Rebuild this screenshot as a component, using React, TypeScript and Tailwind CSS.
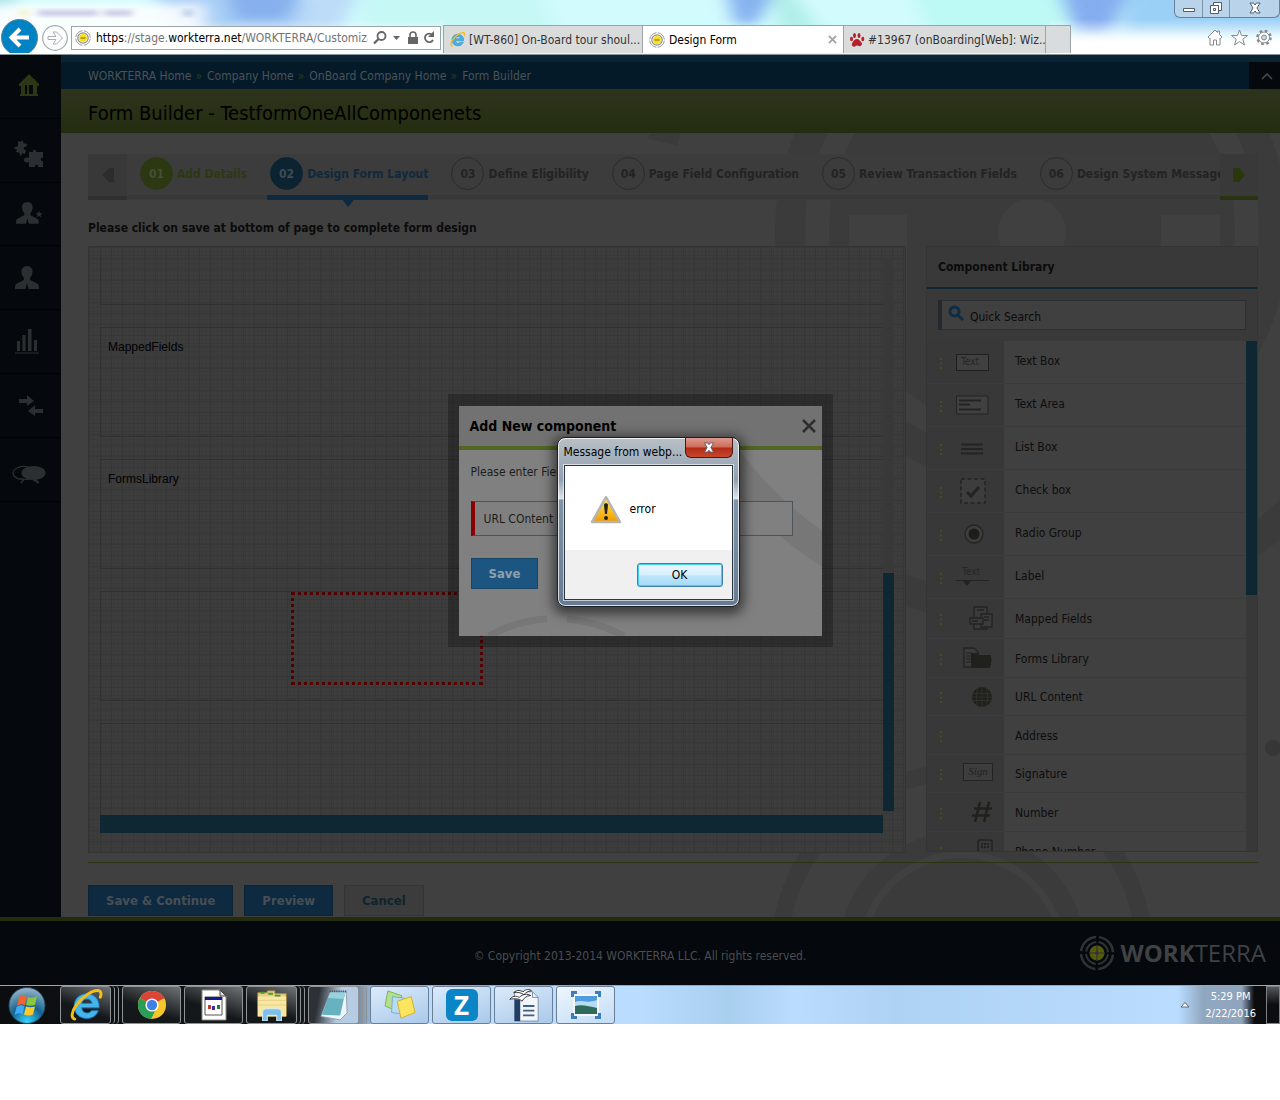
import type { ReactNode } from "react";

interface Step {
  no: string;
  label: string;
  state: "done" | "active" | "todo";
}

interface LibraryItem {
  label: string;
  height: string;
  icon: ReactNode;
}

const crumbs = ["WORKTERRA Home", "Company Home", "OnBoard Company Home", "Form Builder"];

const steps: Step[] = [
  { no: "01", label: "Add Details", state: "done" },
  { no: "02", label: "Design Form Layout", state: "active" },
  { no: "03", label: "Define Eligibility", state: "todo" },
  { no: "04", label: "Page Field Configuration", state: "todo" },
  { no: "05", label: "Review Transaction Fields", state: "todo" },
  { no: "06", label: "Design System Messages", state: "todo" },
];

const stepText = { done: "text-[#2c3812]", active: "text-[#10293c]", todo: "text-[#232323]" };
const stepCircle = {
  done: "border-[#2c3812] bg-[#2c3812] text-[#474d35]",
  active: "border-[#0c2432] bg-[#0c2432] text-[#3f4b52]",
  todo: "border-[#2b2b2b] text-[#232323]",
};

/* ---------- icons ---------- */

function TargetIcon({ className, ring = "#8f8f8f", core = "#f2dc1c" }: { className: string; ring?: string; core?: string }) {
  return (
    <svg viewBox="0 0 36 36" className={className} fill="none" aria-hidden="true">
      <circle cx="18" cy="18" r="16" stroke={ring} strokeWidth="2.5" strokeDasharray="22 3.13" strokeDashoffset="-1.6" />
      <circle cx="18" cy="18" r="11" stroke={ring} strokeWidth="2" strokeDasharray="15 2.28" strokeDashoffset="-1.2" />
      <circle cx="18" cy="18" r="7.5" fill={core} />
      <path d="M18 10v16M10 18h16" stroke={ring} strokeWidth="1.2" />
      <circle cx="18" cy="18" r="1.8" fill={ring} />
    </svg>
  );
}

function SiteIcon({ className }: { className: string }) {
  return (
    <svg viewBox="0 0 16 16" className={className} fill="none" aria-hidden="true">
      <circle cx="8" cy="8" r="7.300" fill="#fff" stroke="#9a9a9a" strokeDasharray="10 1.470" strokeDashoffset="-.7" />
      <circle cx="8" cy="8" r="5.200" stroke="#8b8b8b" strokeWidth="1.200" />
      <circle cx="8" cy="8" r="4" fill="#f6e11a" />
      <path d="M5.500 8h5" stroke="#a08c2a" strokeWidth="1.500" />
    </svg>
  );
}

function IeIcon({ className }: { className: string }) {
  return (
    <svg viewBox="0 0 32 32" className={className} fill="none" aria-hidden="true">
      <path
        d="M27.5 18.5H12.2c.2 2.8 2 4.6 4.6 4.6 1.8 0 3.1-.7 4-2.1h6.2c-1.6 4.3-5.4 7-10.3 7C10.300 28 5.500 23.500 5.500 17S10.300 6 16.700 6c6.600 0 11 4.800 11 11.200 0 .5 0 .9-.2 1.300zM12.300 14.500h9c-.4-2.400-2.100-3.800-4.500-3.800s-4.100 1.400-4.500 3.800z"
        fill="#45b3ec"
        stroke="#1b77b8"
        strokeWidth=".8"
      />
      <path d="M6 28.500c-3.600-1-2.800-6.500 1.200-12.200C12.600 8.500 22.500 2 27.500 3.300c2 .6 2.300 2.900 1.200 5.800" stroke="#f5bd1a" strokeWidth="2.600" strokeLinecap="round" />
    </svg>
  );
}

function PersonPath() {
  return <path d="M13 0c4 0 6 3 5.500 6.500-.3 2.500-1.500 4.500-2.500 5.500l.2 2L24 18c1 1 1 3 1 5H14.500L13 17l-1.500 6H1c0-2 0-4 1-5l7.800-4 .2-2C9 11 7.800 9 7.500 6.500 7 3 9 0 13 0z" />;
}

const navItems: { label: string; height: string; icon: ReactNode }[] = [
  {
    label: "Home",
    height: "h-16",
    icon: (
      <svg viewBox="0 0 24 24" className="mr-1 mb-1 h-6 w-6 fill-[#2d3714]" aria-hidden="true">
        <path d="M12 1l5 5h1v1l4 4v2h-2v8h1v2H3v-2h1v-8H2v-2zM8 12v9h2v-9zm4 0v9h4v-9z" fillRule="evenodd" />
      </svg>
    ),
  },
  {
    label: "Modules",
    height: "h-16",
    icon: (
      <svg viewBox="0 0 30 28" className="mt-1.5 mr-1 h-7 w-[30px] fill-[#2c2f32]" aria-hidden="true">
        <path d="M4 1l3 1c1-3 3-1 2 1l4 1-1 3c-3-1-3 3 0 3l-1 4-3-1c0 4-3 3-2 0l-4-1 1-3c-3 1-4-2-1-2l2-1zM15 12h4c-1-3 4-3 3 0h7v6c-3-1-3 4 0 3v6h-5c1-3-4-3-3 0h-6v-5c-3 1-5 0-5-2s2-3 5-2z" />
      </svg>
    ),
  },
  {
    label: "Administrators",
    height: "h-[63px]",
    icon: (
      <svg viewBox="0 0 28 24" className="mr-1 h-6 w-7 fill-[#2c2f32]" aria-hidden="true">
        <g transform="scale(.95)"><PersonPath /></g>
        <path d="M24 8l1.200 2.800 3 .2-2.300 2 .8 3-2.700-1.700-2.600 1.700.8-3-2.200-2 3-.2z" stroke="#05080c" strokeWidth=".6" />
      </svg>
    ),
  },
  {
    label: "Employees",
    height: "h-16",
    icon: (
      <svg viewBox="0 0 26 24" className="mr-2 h-6 w-[26px] fill-[#2c2f32]" aria-hidden="true">
        <PersonPath />
      </svg>
    ),
  },
  {
    label: "Reports",
    height: "h-16",
    icon: (
      <svg viewBox="0 0 24 25" className="mr-2 h-[25px] w-6 fill-[#2c2f32]" aria-hidden="true">
        <path d="M2 12h3v10H2zM7.500 6h3v16h-3zM13 0h3.500v22H13zM19 11h3v11h-3zM0 23.500h24v1H0z" />
      </svg>
    ),
  },
  {
    label: "Transfers",
    height: "h-16",
    icon: (
      <svg viewBox="0 0 26 22" className="h-[22px] w-[26px] fill-[#2c2f32]" aria-hidden="true">
        <path d="M1 4h8V0l7 6-7 5V8H1zM25 14h-8v-4l-7 6 7 5v-3h8z" />
      </svg>
    ),
  },
  {
    label: "Messages",
    height: "h-16",
    icon: (
      <svg viewBox="0 0 34 20" className="mt-2.5 mr-1 h-5 w-[34px]" fill="none" aria-hidden="true">
        <path d="M16 2C8 0 1 4 1 8c0 3 3 5 6 6h4c3 1 6 0 8 0" stroke="#2c2f32" strokeWidth="1.300" />
        <path d="M12 14l-3 4M23 14l4 4-7-4z" stroke="#2c2f32" strokeWidth="1.500" />
        <ellipse cx="21.500" cy="8" rx="12" ry="7" fill="#2c2f32" />
      </svg>
    ),
  },
];

const stroke = "#232323";

const libraryItems: LibraryItem[] = [
  {
    label: "Text Box",
    height: "h-[43px]",
    icon: (
      <span className="mr-[15px] flex h-[17px] w-[33px] items-center border border-[#1f1f1f] bg-[#404040] pl-1 text-[10px] leading-none text-[#262626]">Text</span>
    ),
  },
  {
    label: "Text Area",
    height: "h-[43px]",
    icon: (
      <svg viewBox="0 0 33 20" className="mr-[15px] h-5 w-[33px]" fill="none" stroke={stroke} aria-hidden="true">
        <path d="M.5 1h31.500v18H.5z" fill="#404040" />
        <path d="M3 5.500h22M3 9.500h11M3 14.500h22" strokeWidth="2" />
      </svg>
    ),
  },
  {
    label: "List Box",
    height: "h-[43px]",
    icon: (
      <svg viewBox="0 0 24 12" className="mt-0.5 mr-5 h-3 w-6" stroke={stroke} aria-hidden="true">
        <path d="M1 1.500h22M1 6h22M1 10.500h22" strokeWidth="2" />
      </svg>
    ),
  },
  {
    label: "Check box",
    height: "h-[43px]",
    icon: (
      <svg viewBox="0 0 26 26" className="mr-[18px] h-[26px] w-[26px]" fill="none" stroke={stroke} aria-hidden="true">
        <path d="M1 1h24v24H1z" strokeDasharray="4 2.500" strokeWidth="1.500" fill="#3d3d3d" />
        <path d="M7 14l4 4 8-9" strokeWidth="3" />
      </svg>
    ),
  },
  {
    label: "Radio Group",
    height: "h-[43px]",
    icon: (
      <svg viewBox="0 0 20 20" className="mr-5 h-5 w-5" fill="none" aria-hidden="true">
        <circle cx="10" cy="10" r="9" stroke={stroke} strokeWidth="1.300" fill="#3d3d3d" />
        <circle cx="10" cy="10" r="5.500" fill="#1e1e19" />
      </svg>
    ),
  },
  {
    label: "Label",
    height: "h-[43px]",
    icon: (
      <span className="mr-[15px] flex w-[33px] flex-col pl-1.5 text-[10px] leading-none text-[#262626]">
        Text
        <svg viewBox="0 0 33 8" className="mt-0.5 -ml-1.5 h-2 w-[33px]" fill="#232323" aria-hidden="true">
          <path d="M0 1h33v1H0zM7 2h8l-4 5z" />
        </svg>
      </span>
    ),
  },
  {
    label: "Mapped Fields",
    height: "h-10",
    icon: (
      <svg viewBox="0 0 24 26" className="mr-[11px] h-[26px] w-6" fill="#3b3b3b" stroke={stroke} strokeWidth="1.300" aria-hidden="true">
        <path d="M5 1h13v22H5z" />
        <path d="M12 8h11v13H12z" />
        <path d="M1 12h13v6H1zM8 4h7M15 11h5M15 14h5M3 15h6" />
      </svg>
    ),
  },
  {
    label: "Forms Library",
    height: "h-[39px]",
    icon: (
      <svg viewBox="0 0 30 22" className="mr-[11px] h-[22px] w-[30px]" aria-hidden="true">
        <path d="M1 1h10l4 4v15H1z" fill="#3b3b3b" stroke={stroke} strokeWidth="1.300" />
        <path d="M3 6h6M3 9h6M3 12h6M3 15h6" stroke={stroke} />
        <path d="M8 6h7l1 2h12v4l1-1-2 10H9l-1-3z" fill="#20201c" />
      </svg>
    ),
  },
  {
    label: "URL Content",
    height: "h-[38px]",
    icon: (
      <svg viewBox="0 0 20 20" className="mr-3 h-5 w-5" fill="none" aria-hidden="true">
        <circle cx="10" cy="10" r="10" fill="#20201c" />
        <path d="M0 6.500h20M0 10h20M0 13.500h20M10 0v20M6 0c-2 6-2 14 0 20M14 0c2 6 2 14 0 20" stroke="#34342f" strokeWidth=".8" />
      </svg>
    ),
  },
  { label: "Address", height: "h-[39px]", icon: null },
  {
    label: "Signature",
    height: "h-[38px]",
    icon: (
      <span className="mr-[11px] mb-1 flex h-[18px] w-[30px] items-center justify-center border border-[#232323] bg-[#3d3d3d] font-['Liberation_Serif',serif] text-[11px] leading-none text-[#232323] italic">Sign</span>
    ),
  },
  {
    label: "Number",
    height: "h-[39px]",
    icon: (
      <svg viewBox="0 0 22 22" className="mr-[11px] h-[22px] w-[22px]" stroke="#20201c" strokeWidth="2.500" aria-hidden="true">
        <path d="M9 1L4 21M18 1l-5 20M3 7.500h18M1 14.500h18" />
      </svg>
    ),
  },
  {
    label: "Phone Number",
    height: "h-[39px]",
    icon: (
      <svg viewBox="0 0 16 20" className="mr-[11px] mb-1 h-5 w-4" fill="none" stroke={stroke} strokeWidth="1.500" aria-hidden="true">
        <rect x="1" y="1" width="14" height="18" rx="2" />
        <path d="M4 5h8M4 8h8" strokeDasharray="2 1" strokeWidth="2" />
      </svg>
    ),
  },
];

/* ---------- browser window ---------- */

function GlassBackdrop() {
  return (
    <svg viewBox="0 0 1280 54" preserveAspectRatio="none" className="absolute inset-0 h-full w-full" aria-hidden="true">
      <defs>
        <filter id="soft" x="-20%" y="-60%" width="140%" height="220%">
          <feGaussianBlur stdDeviation="9 5" />
        </filter>
        <filter id="text-soft">
          <feGaussianBlur stdDeviation="4 2" />
        </filter>
        <linearGradient id="fade" x1="0" x2="0" y1="0" y2="1">
          <stop offset=".35" stopColor="#fff" stopOpacity="0" />
          <stop offset=".8" stopColor="#fff" />
        </linearGradient>
      </defs>
      <rect width="1280" height="54" fill="#d2fbfd" />
      <g filter="url(#soft)">
        <path d="M-20-10h40L8 14H-20z" fill="#a5e3e6" />
        <path d="M150-10h150l20 60H190z" fill="#a9cff6" />
        <path d="M225-10h80l-20 30h-50z" fill="#86b0ee" />
        <path d="M310-10h50l-30 60h-40z" fill="#bcdcf8" />
        <path d="M360-10h180l20 50-200 10z" fill="#c6f8f6" />
        <path d="M725-10h52l-20 34h-22z" fill="#86b2f0" />
        <path d="M770-10h20l30 40h-40z" fill="#b0eee9" />
        <path d="M910-10h160l-10 45H930z" fill="#bdf9f5" />
        <path d="M1058-10h72l-20 45h-34z" fill="#84adf0" />
        <path d="M1130-10h170v45h-180z" fill="#9ad0f6" />
      </g>
      <rect x="-20" y="4" width="225" height="60" fill="#fff" opacity=".85" filter="url(#soft)" />
      <rect width="445" height="54" fill="url(#fade)" opacity=".8" />
      <rect x="1050" width="230" height="54" fill="url(#fade)" />
      <g filter="url(#text-soft)" opacity=".7">
        <path d="M38 13h60M104 13h28" stroke="#b7b2dc" strokeWidth="6" />
        <circle cx="24" cy="13" r="4" fill="#efe9a0" />
        <circle cx="188" cy="13" r="4" fill="#8fa8d8" />
      </g>
    </svg>
  );
}

function BrowserBar() {
  return (
    <header className="relative flex h-[55px] items-end border-b border-[#8a9496] bg-[#d2fbfd] pb-px text-xs">
      <GlassBackdrop />
      <div className="relative flex h-8 w-[71px] shrink-0 items-end">
        <button type="button" aria-label="Back" className="h-[34px] w-10 overflow-hidden pl-px">
          <svg viewBox="0 0 38 34" className="h-[34px] w-[38px]" fill="none" aria-hidden="true">
            <circle cx="18.500" cy="18.500" r="18" fill="#0083c4" stroke="#5d7f90" />
            <path d="M28 18.500H11M19 10l-8.500 8.500L19 27" stroke="#fff" strokeWidth="4" />
          </svg>
        </button>
        <button type="button" aria-label="Forward" className="mb-0.5 ml-0.5">
          <svg viewBox="0 0 26 26" className="h-[26px] w-[26px]" fill="none" stroke="#a5aeb0" aria-hidden="true">
            <circle cx="13" cy="13" r="12.300" fill="#fff" fillOpacity=".6" strokeWidth="1.200" />
            <path d="M6 11.500h8L11 7h3.500l6 6-6 6H11l3-4.500H6z" fill="#fff" />
          </svg>
        </button>
      </div>
      <div className="relative mb-[3px] flex h-6 w-[370px] shrink-0 items-center border border-[#9ba4a6] bg-white">
        <SiteIcon className="ml-[3px] h-4 w-4" />
        <div className="ml-[5px] flex w-[272px] overflow-hidden whitespace-nowrap text-[#737373]">
          <span className="text-black">https</span>://stage.<span className="text-black">workterra.net</span>/WORKTERRA/Customiza
        </div>
        <svg viewBox="0 0 66 16" className="ml-[5px] h-4 w-[66px] shrink-0" fill="none" stroke="#666" aria-hidden="true">
          <circle cx="8.500" cy="6" r="4" strokeWidth="1.800" />
          <path d="M5.500 9L1 13.500" strokeWidth="2.300" />
          <path d="M20 6h7l-3.500 4z" fill="#666" stroke="none" />
          <path d="M35 7h10v7H35z" fill="#666" stroke="none" />
          <path d="M37 8V5c0-4 6-4 6 0v3" strokeWidth="1.600" />
          <path d="M59.500 5A4.300 4.300 0 1 0 60 10" strokeWidth="1.800" />
          <path d="M61 1v6h-6z" fill="#666" stroke="none" />
        </svg>
      </div>
      <nav className="relative flex h-7 min-w-0 flex-1 pl-0.5" aria-label="Browser tabs">
        <button type="button" className="flex w-[200px] items-center gap-[3px] border border-b-0 border-[#9ba4a6] bg-[#dadcdc] pl-[5px] whitespace-nowrap text-[#333]">
          <IeIcon className="h-[17px] w-[17px] shrink-0" />
          [WT-860] On-Board tour shoul...
        </button>
        <button type="button" className="flex w-[200px] items-center gap-1 border-t border-[#9ba4a6] bg-white pl-[6px] text-black">
          <SiteIcon className="h-4 w-4" />
          Design Form
          <svg viewBox="0 0 10 10" className="mr-1.5 ml-auto h-[9px] w-[9px]" stroke="#a3a3a3" strokeWidth="2" aria-hidden="true">
            <path d="M1 1l8 8M9 1L1 9" />
          </svg>
        </button>
        <button type="button" className="flex w-[203px] items-center gap-[3px] border border-b-0 border-[#9ba4a6] bg-[#dadcdc] pl-[5px] whitespace-nowrap text-[#333]">
          <svg viewBox="0 0 16 16" className="h-4 w-4 shrink-0" fill="#b5202a" aria-hidden="true">
            <path d="M8 7c2 0 3 2 4.500 3.500S12 15 10 14s-3-.5-4 .5-4-.5-3-3S6 7 8 7z" />
            <ellipse cx="2.500" cy="7" rx="1.500" ry="2.200" />
            <ellipse cx="5.500" cy="3.500" rx="1.500" ry="2.500" />
            <ellipse cx="10" cy="3.500" rx="1.500" ry="2.500" />
            <ellipse cx="13.800" cy="7" rx="1.500" ry="2.200" />
          </svg>
          #13967 (onBoarding[Web]: Wiz...
        </button>
        <button type="button" aria-label="New tab" className="w-[25px] border-t border-r border-[#9ba4a6] bg-[#d8dcdc]" />
        <div className="mt-1 ml-auto flex items-start pr-[7px]">
          <svg viewBox="0 0 66 17" className="h-[17px] w-[66px]" fill="#fff" stroke="#84898c" aria-hidden="true">
            <path d="M8 1L1 8l1.500 1.500.500-.5v7h3.500v-5h3v5H13V9l.500.500L15 8l-2.500-2.500V2h-2v1.500z" />
            <path d="M32.500 1l2 5.500h6l-4.700 3.700 1.700 5.800-5-3.400-5 3.400 1.700-5.800L24.500 6.500h6z" />
            <circle cx="57" cy="8.500" r="6.500" strokeWidth="2.600" strokeDasharray="2.600 2.500" />
            <circle cx="57" cy="8.500" r="5.500" />
            <circle cx="57" cy="8.500" r="2.500" fill="#c5d6e6" />
          </svg>
        </div>
      </nav>
      <div className="absolute top-0 right-0 flex h-[18px] w-[106px] overflow-hidden rounded-b-md border border-t-0 border-[#68809a] bg-[#b9d3ea]">
        <button type="button" aria-label="Minimize" className="flex w-7 items-start justify-center border-r border-[#7d93ac]">
          <svg viewBox="0 0 12 10" className="mt-[3px] h-2.5 w-3" aria-hidden="true">
            <path d="M.5 5.500h11v3H.5z" fill="#fff" stroke="#525d6d" />
          </svg>
        </button>
        <button type="button" aria-label="Restore" className="flex w-[27px] items-start justify-center border-r border-[#7d93ac]">
          <svg viewBox="0 0 12 12" className="mt-0.5 h-3 w-3" fill="#fff" stroke="#525d6d" fillRule="evenodd" aria-hidden="true">
            <path d="M3.500.5h8v8h-8z" />
            <path d="M.5 3.500h8v8h-8zM3.500 6.500h2v2h-2z" />
          </svg>
        </button>
        <button type="button" aria-label="Close" className="flex flex-1 items-start justify-center">
          <svg viewBox="0 0 12 12" className="mt-0.5 h-3 w-3" aria-hidden="true">
            <path d="M1 1h3.500L6 3l1.500-2H11L8 6l3 5H7.500L6 9l-1.500 2H1l3-5z" fill="#fff" stroke="#525d6d" />
          </svg>
        </button>
      </div>
    </header>
  );
}

/* ---------- page ---------- */

function Watermark() {
  return (
    <svg viewBox="61 133 1219 784" preserveAspectRatio="xMaxYMin slice" className="absolute inset-0 h-full w-full" fill="none" stroke="#3b3b3b" aria-hidden="true">
      <circle cx="1032" cy="232" r="380" strokeWidth="30" strokeDasharray="1050 144" strokeDashoffset="-90" />
      <circle cx="1032" cy="232" r="242" strokeWidth="30" />
      <circle cx="1032" cy="232" r="203" fill="#3b3b3b" stroke="none" />
      <path d="M849 215h58v100h-58zM1161 215h59v100h-59z" fill="#404040" stroke="none" />
      <circle cx="1032" cy="232" r="34" fill="#404040" stroke="none" />
      <circle cx="962" cy="955" r="183" strokeWidth="17" />
      <circle cx="962" cy="955" r="114" strokeWidth="20" />
      <circle cx="962" cy="955" r="97" fill="#3b3b3b" stroke="none" />
      <circle cx="1273" cy="748" r="8" fill="#363636" stroke="none" />
    </svg>
  );
}

function StepBar() {
  return (
    <div className="flex h-[46px] bg-[#3c3c3c] text-xs font-bold">
      <button type="button" aria-label="Previous" className="flex w-[39px] shrink-0 items-center justify-center border-b-4 border-[#303030] bg-[#383838]">
        <svg viewBox="0 0 12 14" className="h-3.5 w-3" fill="#2c2c2c" aria-hidden="true">
          <path d="M12 0v14H7L0 7l7-7z" />
        </svg>
      </button>
      <ol className="mb-px flex min-w-0 flex-1 gap-5 overflow-x-clip border-b-4 border-[#383838] pl-2.5 whitespace-nowrap">
        {steps.map(step => (
          <li key={step.no} className="relative shrink-0">
            <a
              href={`#step-${step.no}`}
              aria-current={step.state === "active" ? "step" : undefined}
              className={`-mb-1 flex h-[45px] items-center gap-1 pl-[3px] pb-1.5 ${stepText[step.state]}`}
            >
              <span className={`flex size-[33px] items-center justify-center rounded-full border ${stepCircle[step.state]}`}>{step.no}</span>
              {step.label}
            </a>
            {step.state === "active" && (
              <svg viewBox="0 0 160 12" preserveAspectRatio="none" className="absolute top-[41px] left-0 h-3 w-full" fill="#0e2a40" aria-hidden="true">
                <path d="M0 0h160v5H0zM75 5h11l-5.500 7z" />
              </svg>
            )}
          </li>
        ))}
      </ol>
      <button type="button" aria-label="Next" className="flex w-[38px] shrink-0 items-center justify-center border-b-4 border-[#28330f] bg-[#393939]">
        <svg viewBox="0 0 12 14" className="h-3.5 w-3" fill="#28370c" aria-hidden="true">
          <path d="M0 0v14h6l6-7-6-7z" />
        </svg>
      </button>
    </div>
  );
}

function DropBox({ label, children }: { label?: string; children?: ReactNode }) {
  return (
    <div className="h-[110px] shrink-0 border border-r-0 border-[#313131]">
      {label && <p className="px-[7px] pt-[11px] font-['Liberation_Sans',Arial,sans-serif] text-xs leading-4 text-black">{label}</p>}
      {children}
    </div>
  );
}

function Canvas() {
  return (
    <section
      aria-label="Form canvas"
      className="min-w-0 flex-1 border border-[#343434] bg-[#3d3d3d] bg-[linear-gradient(#373737_1px,transparent_1px),linear-gradient(90deg,#373737_1px,transparent_1px),linear-gradient(#3a3a3a_1px,transparent_1px),linear-gradient(90deg,#3a3a3a_1px,transparent_1px)] bg-[size:11px_11px,11px_11px,4px_4px,4px_4px] pt-2.5 pr-[11px] pb-[19px] pl-[11px]"
    >
      <div className="flex h-[558px]">
        <div className="flex min-w-0 flex-1 flex-col gap-[22px] overflow-hidden">
          <div className="h-12 shrink-0 border border-t-0 border-r-0 border-[#313131]" />
          <DropBox label="MappedFields" />
          <DropBox label="FormsLibrary" />
          <DropBox>
            <div className="ml-[190px] h-[93px] w-48 border-3 border-dotted border-[#530000]" />
          </DropBox>
          <DropBox />
        </div>
        <div className="flex w-[11px] flex-col justify-end bg-[#393939] pb-1">
          <div className="h-[238px] bg-[#0f2733]" />
        </div>
      </div>
      <div className="mr-[11px] h-[18px] bg-[#0f2733]" />
    </section>
  );
}

function ComponentLibrary() {
  return (
    <aside className="flex h-[606px] w-[332px] shrink-0 flex-col overflow-hidden border border-[#343434] bg-[#393939]">
      <h2 className="flex h-[42px] shrink-0 items-center border-b-2 border-[#0f2733] px-[11px] pb-px text-xs font-bold text-[#0b0b0b]">Component Library</h2>
      <div className="mx-[11px] mt-[11px] mb-[11px] flex h-[30px] shrink-0 items-center border border-l-4 border-[#2c2f31] border-l-[#23292e] bg-[#404040]">
        <svg viewBox="0 0 16 16" className="mb-1 ml-1.5 h-4 w-4" fill="none" stroke="#102c44" strokeWidth="3" aria-hidden="true">
          <circle cx="6.500" cy="6.500" r="4.500" />
          <path d="M10 10l5 5" />
        </svg>
        <input aria-label="Quick Search" defaultValue="Quick Search" className="mt-[3px] ml-1.5 min-w-0 flex-1 bg-transparent text-xs text-[#0a0a0a] outline-none" />
      </div>
      <div className="flex min-h-0 flex-1">
        <ul className="min-w-0 flex-1 overflow-hidden">
          {libraryItems.map((item, index) => (
            <li key={item.label} className={`flex ${item.height}`}>
              <div className="flex w-[77px] shrink-0 items-center justify-between border-b border-[#3d3d3d] bg-[#383838] pl-[13px]">
                <svg viewBox="0 0 2 11" className="mt-0.5 h-[11px] w-0.5" fill="#444d1c" aria-hidden="true">
                  <path d="M0 0h2v2H0zM0 4.500h2v2H0zM0 9h2v2H0z" />
                </svg>
                {item.icon}
              </div>
              <div className={`flex flex-1 items-center border-b border-[#3a3a3a] bg-[#404040] pl-[11px] text-xs text-[#0d0d0d] ${index < 6 ? "pb-[3px]" : "pt-px"}`}>{item.label}</div>
            </li>
          ))}
        </ul>
        <div className="w-[11px] bg-[#383838]">
          <div className="h-[254px] bg-[#0f2733]" />
        </div>
      </div>
    </aside>
  );
}

function AlertDialog() {
  return (
    <div
      role="alertdialog"
      aria-labelledby="alert-title"
      className="absolute top-[31px] left-[98px] flex h-[170px] w-[183px] flex-col rounded-lg border border-[#1a1f26] bg-[linear-gradient(#b9c0c6_0%,#8fa0b0_25%,#dfe6ea_36%,#8295a8_37%,#667b92_100%)] px-1.5 pb-1.5 text-xs shadow-[0_3px_12px_4px_rgba(0,0,0,0.55),inset_0_0_0_1px_rgba(255,255,255,0.75)]"
    >
      <div className="flex h-[27px] shrink-0 justify-between">
        <h2 id="alert-title" className="relative pt-1.5 whitespace-nowrap text-black">Message from webp...</h2>
        <button type="button" aria-label="Close" className="flex h-5 w-12 shrink-0 items-center justify-center rounded-b-md border border-t-0 border-[#4a1512] bg-[linear-gradient(#dc9a8e,#cf6b58_48%,#b02a14_52%,#c8492f)]">
          <svg viewBox="0 0 12 12" className="h-[11px] w-3" aria-hidden="true">
            <path d="M1 1h3.500L6 3l1.500-2H11L8 6l3 5H7.500L6 9l-1.500 2H1l3-5z" fill="#fff" stroke="#525d6d" />
          </svg>
        </button>
      </div>
      <div className="flex min-h-0 flex-1 flex-col border border-[#2c3640] bg-white outline outline-white/60">
        <div className="flex flex-1 items-center gap-2 pb-0.5 pl-[25px] text-black">
          <svg viewBox="0 0 32 29" className="mt-1 h-[29px] w-8 shrink-0" aria-hidden="true">
            <defs>
              <linearGradient id="warn" x1="0" x2="0" y1="0" y2="1">
                <stop offset="0" stopColor="#fff04a" />
                <stop offset="1" stopColor="#f49b00" />
              </linearGradient>
            </defs>
            <path d="M16 2L2 27h28z" fill="url(#warn)" stroke="#b5b5b5" strokeWidth="2.500" strokeLinejoin="round" />
            <path d="M14 10c0-2.500 4-2.500 4 0l-1 9h-2z" fill="#222" />
            <circle cx="16" cy="23" r="2" fill="#222" />
          </svg>
          <span className="pt-1">error</span>
        </div>
        <div className="flex h-[49px] items-center justify-end bg-[#f0f0f0] pr-[9px]">
          <button type="button" className="h-6 w-[86px] rounded-[3px] border border-[#3c7fb1] bg-[linear-gradient(#eaf6fd,#d9f0fc_48%,#bee6fd_52%,#a7d9f5)] text-black shadow-[inset_0_0_0_1px_#45d0f8]">OK</button>
        </div>
      </div>
    </div>
  );
}

function AddComponentDialog() {
  return (
    <div className="absolute inset-x-0 top-[339px] flex justify-center">
      <div role="dialog" aria-labelledby="dialog-title" className="relative h-[253px] w-[385px] border-[11px] border-t-12 border-black/25">
        <div className="relative flex h-full flex-col overflow-hidden bg-[#808080]">
          <svg viewBox="0 0 363 230" className="absolute inset-0 h-full w-full" fill="none" stroke="#777" aria-hidden="true">
            <circle cx="573" cy="-174" r="380" strokeWidth="30" />
            <path d="M30 230Q58 214 88 213M108 213Q140 216 165 230" strokeWidth="7" />
          </svg>
          <div className="relative flex h-11 shrink-0 items-center justify-between border-b-4 border-[#516621] bg-[#727272] pr-1.5 pl-[11px]">
            <h2 id="dialog-title" className="text-sm font-bold text-black">Add New component</h2>
            <button type="button" aria-label="Close">
              <svg viewBox="0 0 14 14" className="h-3.5 w-3.5" stroke="#2e2e2e" strokeWidth="2.500" aria-hidden="true">
                <path d="M1 1l12 12M13 1L1 13" />
              </svg>
            </button>
          </div>
          <div className="relative flex flex-col items-start pr-[29px] pl-3 text-xs text-[#1c1c1c]">
            <label htmlFor="field-name" className="mt-3.5 leading-4">Please enter Fiel</label>
            <input id="field-name" defaultValue="URL COntent" className="mt-[21px] h-[35px] w-full border border-l-4 border-[#4c555b] border-l-[#8b0000] bg-[#808080] px-[9px] outline-none" />
            <button type="button" className="mt-[22px] h-[31px] border border-[#184664] bg-[#1c5580] px-[17px] text-[13px] font-bold text-[#8fa0ad]">Save</button>
          </div>
        </div>
        <AlertDialog />
      </div>
    </div>
  );
}

function Page() {
  return (
    <div className="relative bg-[#05080c]">
      <div className="flex border-b-4 border-[#232c0d]">
        <nav className="w-[61px] shrink-0" aria-label="Main">
          {navItems.map(item => (
            <a key={item.label} href={`#${item.label.toLowerCase()}`} aria-label={item.label} className={`flex items-center justify-center border-b border-[#010203] ${item.height}`}>
              {item.icon}
            </a>
          ))}
        </nav>
        <div className="min-w-0 flex-1">
          <div className="flex h-[34px] items-end border-t-7 border-[#0a2434] bg-[#051a28] text-xs text-[#4a5358]">
            <nav className="flex h-full flex-1 items-center gap-1 pl-[27px]" aria-label="Breadcrumb">
              {crumbs.map((crumb, index) => (
                <span key={crumb} className="flex gap-[5px]">
                  {index > 0 && <span className="text-[#263c1a]">»</span>}
                  <a href="#home">{crumb}</a>
                </span>
              ))}
            </nav>
            <button type="button" aria-label="Collapse" className="flex h-full w-[31px] items-center justify-center bg-[#05080c] pl-1">
              <svg viewBox="0 0 12 8" className="h-2 w-3" fill="none" stroke="#4a4d50" strokeWidth="1.500" aria-hidden="true">
                <path d="M1 7l5-5 5 5" />
              </svg>
            </button>
          </div>
          <h1 className="flex h-11 items-center bg-linear-to-b from-[#2d341c] to-[#242d10] pt-1 pl-[27px] text-xl text-black">Form Builder - TestformOneAllComponenets</h1>
          <main className="relative bg-[#404040]">
            <Watermark />
            <div className="relative pt-[21px] pr-[22px] pb-px pl-[27px]">
              <StepBar />
              <p className="mt-5 mb-2.5 text-xs leading-4 font-bold text-[#0b0b0b]">Please click on save at bottom of page to complete form design</p>
              <div className="flex gap-5">
                <Canvas />
                <ComponentLibrary />
              </div>
              <div className="mt-[9px] flex gap-[11px] border-t border-[#28330f] pt-[22px] text-[13px] font-bold">
                <button type="button" className="h-[31px] border border-[#0c2536] bg-[#0e2a40] px-[17px] text-[#474f55]">Save &amp; Continue</button>
                <button type="button" className="h-[31px] border border-[#0c2536] bg-[#0e2a40] px-[17px] text-[#474f55]">Preview</button>
                <button type="button" className="h-[31px] border border-[#343434] bg-[#3c3c3c] px-[17px] text-[#10242e]">Cancel</button>
              </div>
            </div>
          </main>
        </div>
      </div>
      <footer className="relative flex h-16 items-center justify-center pt-1.5 text-xs text-[#4b4d50]">
        © Copyright 2013-2014 WORKTERRA LLC. All rights reserved.
        <div className="absolute top-3.5 right-3.5 flex items-center gap-1.5 font-['Open_Sans',sans-serif] text-2xl leading-9 text-[#3f4245]">
          <TargetIcon className="size-9" ring="#303336" core="#57590c" />
          <span><b>WORK</b>TERRA</span>
        </div>
      </footer>
      <AddComponentDialog />
    </div>
  );
}

/* ---------- taskbar ---------- */

const darkTask = "bg-[linear-gradient(20deg,#15181b_40%,#6f7376_100%)] border-[#8f9396]";
const lightTask = "bg-[linear-gradient(160deg,#dbeafb,#a9c9ea)] border-[#6a7f96]";

const taskIcons: { label: string; tone: string; stack: boolean; icon: ReactNode }[] = [
  { label: "Internet Explorer", tone: darkTask, stack: true, icon: <IeIcon className="size-9" /> },
  {
    label: "Chrome",
    tone: darkTask,
    stack: false,
    icon: (
      <svg viewBox="0 0 32 32" className="size-[30px]" aria-hidden="true">
        <circle cx="16" cy="16" r="15" fill="#f7c62b" />
        <path d="M16 16L3 8.500A15 15 0 0 1 29 8.500z" fill="#dc4437" />
        <path d="M16 8h13.200" stroke="#dc4437" strokeWidth="2" />
        <path d="M16 16L3 8.500A15 15 0 0 0 15 31l6-12z" fill="#2a9d57" />
        <circle cx="16" cy="16" r="7" fill="#fff" />
        <circle cx="16" cy="16" r="5.500" fill="#3f7fe8" />
      </svg>
    ),
  },
  {
    label: "Document",
    tone: darkTask,
    stack: false,
    icon: (
      <svg viewBox="0 0 26 32" className="h-8 w-[26px]" aria-hidden="true">
        <path d="M1 1h18l6 6v24H1z" fill="#fdfdfa" stroke="#888" />
        <path d="M19 1v6h6z" fill="#ddd" stroke="#444" />
        <path d="M4 8h17v18H4z" fill="#fff" stroke="#555" />
        <path d="M4 8h17v3H4z" fill="#17178c" />
        <path d="M7 16h3v4H7z" fill="#c33" />
        <path d="M11 17h3v4h-3z" fill="#33a" />
        <path d="M16 16h3v4h-3z" fill="#2a7a2a" />
      </svg>
    ),
  },
  {
    label: "Explorer",
    tone: darkTask,
    stack: true,
    icon: (
      <svg viewBox="0 0 34 34" className="size-8" aria-hidden="true">
        <path d="M2 4h10v-2h8v3h12v24H2z" fill="#ecd07a" stroke="#b59540" />
        <path d="M2 8h30v21H2z" fill="#f7e7a5" />
        <path d="M5 3h4v2H5zM13 4h5v2h-5zM20 6h6v2h-6z" fill="#3c9a48" />
        <path d="M2 12h30M2 17h30" stroke="#e6cd7c" />
        <path d="M7 34v-9c0-3 2-4 4-4h12c2 0 4 1 4 4v9h-5v-6H12v6z" fill="#7fc0e8" stroke="#d9effb" />
      </svg>
    ),
  },
  {
    label: "Notepad",
    tone: "bg-[linear-gradient(100deg,#2d3135_20%,#b5cce4_60%)] border-[#8f9396]",
    stack: true,
    icon: (
      <svg viewBox="0 0 32 36" className="h-8 w-7" aria-hidden="true">
        <path d="M12 3h18l1 24-8 8-22-4z" fill="#eef4f7" stroke="#8b9aa3" />
        <path d="M12 3h17l-6 27-21-1z" fill="#66b2c0" />
        <path d="M12 3h17l-2 8-18-1z" fill="#9ad2dc" />
        <path d="M11 2.500h19" stroke="#555" strokeWidth="2" strokeDasharray="1.500 1" />
      </svg>
    ),
  },
  {
    label: "Sticky Notes",
    tone: lightTask,
    stack: false,
    icon: (
      <svg viewBox="0 0 34 32" className="h-[30px] w-8" aria-hidden="true">
        <path d="M4 1l15 5-6 16L1 17z" fill="#b5e08a" stroke="#7fb257" />
        <path d="M9 7l14 2-2 17L8 24z" fill="#b9dcf6" stroke="#7ba8d0" />
        <path d="M14 12l15-5 4 17-15 6z" fill="#fbe55f" stroke="#cfae2b" />
      </svg>
    ),
  },
  {
    label: "Zoom",
    tone: lightTask,
    stack: false,
    icon: <span className="flex h-8 w-8 items-center justify-center rounded-md bg-[#0a86c6] font-['Open_Sans',sans-serif] text-[26px] leading-none font-bold text-white">Z</span>,
  },
  {
    label: "Writer",
    tone: lightTask,
    stack: false,
    icon: (
      <svg viewBox="0 0 32 36" className="h-[34px] w-8" aria-hidden="true">
        <path d="M6 4h19l6 6v25H6z" fill="#f2f6fa" stroke="#7b8fa5" />
        <path d="M25 4v6h6" fill="none" stroke="#7b8fa5" />
        <path d="M6 12h6v23H6z" fill="#1f3f66" />
        <path d="M15 19h12M15 24h12M15 29h12" stroke="#3d5f8a" strokeWidth="2" />
        <path d="M5 5c4-4 8-2 10-1 3-3 7-3 9-1-4 0-6 2-8 4-3-2-7-3-11-2zM1 12c4-5 8-3 10-2 4-4 9-4 12-2-5 0-7 3-9 6-3-3-8-3-13-2z" fill="#fff" stroke="#333" />
      </svg>
    ),
  },
  {
    label: "Snipping Tool",
    tone: "bg-[linear-gradient(160deg,#eef6fe,#c2dcf5)] border-[#6a7f96]",
    stack: false,
    icon: (
      <svg viewBox="0 0 32 30" className="h-[30px] w-8" aria-hidden="true">
        <path d="M3 4h26v22H3z" fill="#f4f6f8" />
        <path d="M5 6h22v8H5z" fill="#4f9be0" />
        <path d="M5 12c6-3 12 2 22-2v8H5z" fill="#b7dbf2" />
        <path d="M5 16c6-2 14 0 22 2v6H5z" fill="#2f6b5b" />
        <path d="M2.500 7V2.500H7M25 2.500h4.500V7M29.500 23v4.500H25M7 27.500H2.500V23" fill="none" stroke="#3d7dbd" strokeWidth="3" />
      </svg>
    ),
  },
];

function Taskbar() {
  return (
    <footer className="flex h-[39px] items-stretch border-t border-[#98a7b3] bg-[linear-gradient(90deg,#0b0d0f_0%,#15181b_25%,#b9dcff_30%,#b9dcff_50%,#a9cfef_57%,#badcff_62%,#aed2f4_70%,#b9dcff_92%,#90a7c0_94%,#8fa5bd_97%,#0a0c0e_98%)] text-[11px]">
      <button type="button" aria-label="Start" className="w-[60px] shrink-0 pl-2">
        <svg viewBox="0 0 38 37" className="h-[37px] w-[38px]" aria-hidden="true">
          <defs>
            <radialGradient id="orb" cx=".5" cy=".95" r=".9">
              <stop offset="0" stopColor="#35d7ff" />
              <stop offset=".5" stopColor="#14628f" />
              <stop offset="1" stopColor="#8fb0c6" />
            </radialGradient>
          </defs>
          <circle cx="19" cy="18.500" r="18" fill="url(#orb)" stroke="#24485e" />
          <path d="M11 10c3-2 5-1 8 0l-2 8c-3-1-5-1-8 1z" fill="#f0652f" />
          <path d="M20 10c3 1 6 1 9-1l-2 9c-3 1-6 1-9 0z" fill="#8cc63f" />
          <path d="M8.500 20c3-2 5-2 8-1l-2 8c-3-1-5-1-8 1z" fill="#3fa9f5" />
          <path d="M18 19.500c3 1 6 1 9 0l-2 8c-3 1.500-6 1-9 0z" fill="#fcc92a" />
        </svg>
      </button>
      <div className="flex flex-1 gap-[3px]">
        {taskIcons.map(task => (
          <div key={task.label} className="flex w-[59px]">
            <button type="button" aria-label={task.label} className={`flex flex-1 items-center justify-center rounded-[3px] border ${task.tone}`}>
              {task.icon}
            </button>
            {task.stack && (
              <>
                <span className="w-1 rounded-r-sm border-r border-[#8f9396]" />
                <span className="w-1 rounded-r-sm border-r border-[#8f9396]" />
              </>
            )}
          </div>
        ))}
      </div>
      <button type="button" aria-label="Show hidden icons" className="pr-[15px]">
        <svg viewBox="0 0 10 6" className="h-1.5 w-2.5" aria-hidden="true">
          <path d="M5 .5L9 5H1z" fill="#fff" stroke="#5b6b7c" />
        </svg>
      </button>
      <div className="flex flex-col justify-center pr-2.5 pb-px text-center leading-[17px] text-white">
        <span>5:29 PM</span>
        <span>2/22/2016</span>
      </div>
      <button type="button" aria-label="Show desktop" className="w-3.5 border border-[#7d8286] bg-linear-to-b from-[#55595c] to-[#0b0d0f] to-50%" />
    </footer>
  );
}

export default function App() {
  return (
    <div className="w-full bg-white font-['DejaVu_Sans_Condensed','DejaVu_Sans',sans-serif]">
      <BrowserBar />
      <Page />
      <Taskbar />
    </div>
  );
}
